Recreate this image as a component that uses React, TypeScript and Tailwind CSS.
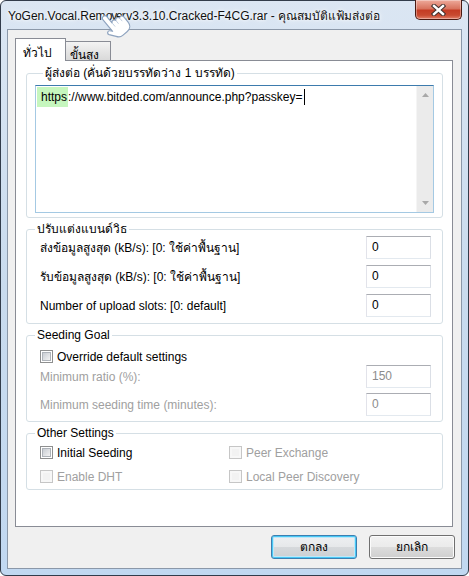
import type { ReactNode } from 'react';

const ui = "font-['Liberation_Sans','Noto_Sans','DejaVu_Sans',sans-serif] text-[12px] text-black";

function Check({ disabled }: { disabled?: boolean }) {
  return (
    <span
      className={
        disabled
          ? 'flex w-[13px] h-[13px] shrink-0 border border-[#c6c6c6] bg-[#f7f7f7] p-[2px]'
          : 'flex w-[13px] h-[13px] shrink-0 border border-[#8e8f8f] bg-white p-px'
      }
    >
      <span
        className={
          disabled
            ? 'flex-1 bg-[#f2f2f2]'
            : 'flex-1 border border-[#aeb3b9] bg-gradient-to-br from-[#c9cdd3] to-[#f3f3f3]'
        }
      />
    </span>
  );
}

function CheckRow({ label, disabled }: { label: string; disabled?: boolean }) {
  return (
    <label className={`flex items-center gap-[4px] h-[17px] ${disabled ? 'text-[#a0a0a0]' : ''}`}>
      <Check disabled={disabled} />
      <span>{label}</span>
    </label>
  );
}

function NumBox({ value, disabled }: { value: string; disabled?: boolean }) {
  return (
    <div
      className={`w-[65px] h-[23px] shrink-0 border border-[#abadb3] border-l-[#e2e3ea] border-r-[#dbdfe6] border-b-[#e3e9ef] bg-white pl-[5px] leading-[20px] ${
        disabled ? 'text-[#8c8c8c]' : ''
      }`}
    >
      {value}
    </div>
  );
}

function FieldRow({ label, value, disabled }: { label: string; value: string; disabled?: boolean }) {
  return (
    <div className="flex items-center justify-between pl-[13px] pr-[11px]">
      <span className={disabled ? 'text-[#a0a0a0]' : ''}>{label}</span>
      <NumBox value={value} disabled={disabled} />
    </div>
  );
}

function Group({ title, className, children }: { title: string; className?: string; children: ReactNode }) {
  return (
    <fieldset className={`ml-[10px] mr-[9px] rounded-[3px] border border-[#d5dfe5] ${className ?? ''}`}>
      <legend className="ml-[8px] px-[2px] leading-[12px]">{title}</legend>
      {children}
    </fieldset>
  );
}

// mouse pointer (hand) resting over the caption
function HandCursor() {
  return (
    <svg width="34" height="34" viewBox="0 0 26 26" className="absolute left-[96px] top-[7px]">
      <g transform="rotate(-40 13 13) translate(4.5 2)">
        <path
          d="M4.6 10 V2.6 a1.9 1.9 0 0 1 3.8 0 V8.8 a1.8 1.8 0 0 1 3.4 0.4 a1.8 1.8 0 0 1 3.4 0.5 a1.7 1.7 0 0 1 3 1.2 V16 c0 3.2 -2.2 5.4 -5.4 5.4 H8.5 c-2.2 0 -3.3 -1.1 -4.3 -2.7 L0.9 14.2 a1.5 1.5 0 0 1 2.3 -1.9 L4.6 14 Z"
          fill="#ffffff"
          stroke="#8ea3bf"
          strokeWidth="0.9"
          strokeLinejoin="round"
        />
        <path d="M8.4 9 V12.5 M11.8 9.4 V12.5 M15.2 9.9 V12.8" stroke="#c3d0e1" strokeWidth="0.7" fill="none" />
      </g>
    </svg>
  );
}

function CloseGlyph() {
  return (
    <svg width="15" height="12" viewBox="0 0 15 12">
      <path d="M3 2 L12 10 M12 2 L3 10" stroke="#40302d" strokeWidth="4.4" strokeLinecap="square" />
      <path d="M3 2 L12 10 M12 2 L3 10" stroke="#ffffff" strokeWidth="2.4" strokeLinecap="square" />
    </svg>
  );
}

export default function App() {
  return (
    <div className={`w-[469px] h-[576px] bg-white ${ui}`}>
      <div className="flex flex-col h-full rounded-[6px] border border-[#323c4b] bg-gradient-to-b from-[#dbe6f3] via-[#c9dbee] to-[#c1d8f1]">
        {/* caption */}
        <div className="relative flex items-start h-[28px] pl-[7px]">
          <span className="mt-[8px] leading-[15px] whitespace-nowrap text-[#101010] [text-shadow:0_0_6px_#ffffff,0_0_3px_#ffffff]">
            YoGen.Vocal.Rem<span className="tracking-[-1.1px]">over.</span>v3.3.10.Cracked-F4CG.rar - คุณสมบัติแฟ้มส่งต่อ
          </span>
          <HandCursor />
          <div className="ml-auto mr-[6px] -mt-px flex items-center justify-center w-[47px] h-[20px] rounded-b-[5px] border border-t-0 border-[#4a1a12] bg-[linear-gradient(#eeaa9b_0%,#d8745f_45%,#c43c24_55%,#c84a30_80%,#e2806a_100%)] shadow-[inset_0_0_0_1px_rgba(255,255,255,0.35)]">
            <CloseGlyph />
          </div>
        </div>

        {/* client area */}
        <div className="mx-[6px] mb-[6px] flex-1 flex flex-col border border-[#8b98a9] bg-[#f0f0f0]">
          <div className="mt-[8px] ml-[7px] flex items-end h-[22px]">
            <div className="relative z-10 -mb-px flex items-center w-[51px] h-[23px] border border-b-0 border-[#898c95] bg-white pl-[7px] pt-[6px]">
              ทั่วไป
            </div>
            <div className="flex items-center w-[45px] h-[19px] border border-l-0 border-b-0 border-[#898c95] bg-gradient-to-b from-[#f3f3f3] to-[#d9d9d9] pl-[4px] pt-[7px]">
              ขั้นสูง
            </div>
          </div>

          <div className="ml-[7px] w-[438px] h-[467px] border border-[#898c95] bg-white flex flex-col gap-[5px] pt-[6px]">
            <Group title="ผู้ส่งต่อ (คั่นด้วยบรรทัดว่าง 1 บรรทัด)" className="px-[8px] pb-[4px]">
              <div className="mt-[6px] flex h-[128px] border border-[#a4c9e3] border-t-[#3d7bad] bg-white">
                <div className="flex-1 pl-[1px] pt-px">
                  <div className="flex items-center h-[20px]">
                    <span className="bg-[#c6f6be] pl-[4px] pr-[1px] leading-[20px]">https</span>
                    <span>://www.bitded.com/announce.php?passkey=</span>
                    <span className="ml-px w-px h-[16px] bg-black" />
                  </div>
                </div>
                <div className="w-[17px] flex flex-col items-center justify-between bg-[#ebebeb] border-l border-[#f5f5f5] py-[7px]">
                  <svg width="7" height="4" viewBox="0 0 7 4">
                    <path d="M0 4 L3.5 0 L7 4 Z" fill="#a8a8a8" />
                  </svg>
                  <svg width="7" height="4" viewBox="0 0 7 4">
                    <path d="M0 0 L3.5 4 L7 0 Z" fill="#a8a8a8" />
                  </svg>
                </div>
              </div>
            </Group>

            <Group title="ปรับแต่งแบนด์วิธ" className="pb-[6px]">
              <div className="mt-px flex flex-col gap-[6px]">
                <FieldRow label="ส่งข้อมูลสูงสุด (kB/s): [0: ใช้ค่าพื้นฐาน]" value="0" />
                <FieldRow label="รับข้อมูลสูงสุด (kB/s): [0: ใช้ค่าพื้นฐาน]" value="0" />
                <FieldRow label="Number of upload slots: [0: default]" value="0" />
              </div>
            </Group>

            <Group title="Seeding Goal" className="pb-[5px]">
              <div className="mt-[7px] pl-[13px]">
                <CheckRow label="Override default settings" />
              </div>
              <div className="flex flex-col gap-[5px]">
                <FieldRow label="Minimum ratio (%):" value="150" disabled />
                <FieldRow label="Minimum seeding time (minutes):" value="0" disabled />
              </div>
            </Group>

            <Group title="Other Settings" className="pb-[4px]">
              <div className="mt-[5px] pl-[13px] grid grid-cols-[189px_1fr] gap-y-[7px]">
                <CheckRow label="Initial Seeding" />
                <CheckRow label="Peer Exchange" disabled />
                <CheckRow label="Enable DHT" disabled />
                <CheckRow label="Local Peer Discovery" disabled />
              </div>
            </Group>
          </div>

          <div className="mt-[8px] pr-[6px] flex justify-end gap-[12px]">
            <button className="w-[86px] h-[24px] rounded-[3px] border border-[#3c7fb1] bg-[linear-gradient(#eef0f2_0%,#e6e8ea_50%,#d6d9dc_50%,#ccd0d3_100%)] shadow-[inset_0_0_0_1px_#48c8f5,inset_0_0_0_2px_#bfe7f8]">
              ตกลง
            </button>
            <button className="w-[86px] h-[24px] rounded-[3px] border border-[#707070] bg-[linear-gradient(#f2f2f2_0%,#ebebeb_50%,#dddddd_50%,#cfcfcf_100%)] shadow-[inset_0_0_0_1px_#fcfcfc]">
              ยกเลิก
            </button>
          </div>
        </div>
      </div>
    </div>
  );
}
